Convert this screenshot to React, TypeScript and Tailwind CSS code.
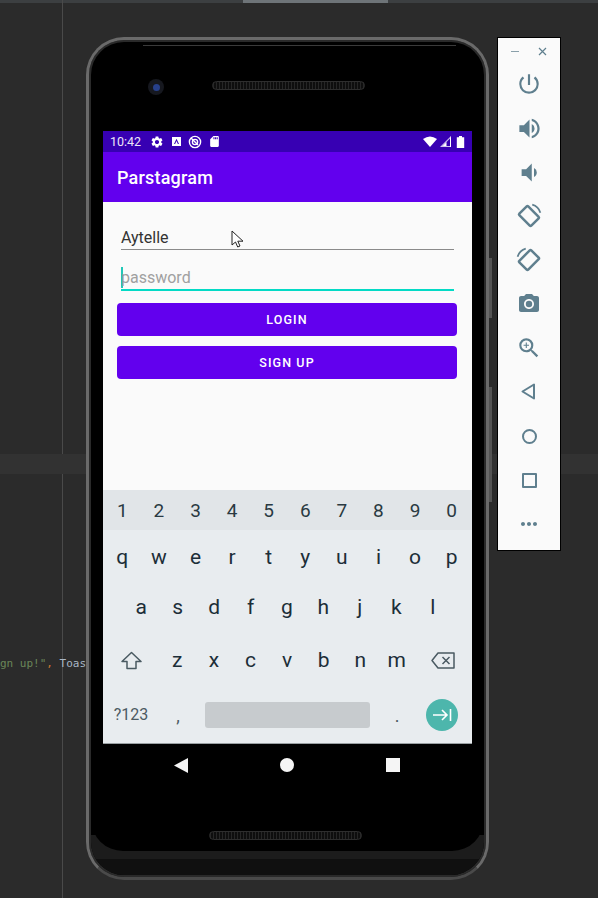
import { MdSettings, MdSdStorage, MdVolumeUp, MdVolumeDown, MdCameraAlt, MdZoomIn, MdMoreHoriz, MdPowerSettingsNew } from "react-icons/md";

const digits = ["1", "2", "3", "4", "5", "6", "7", "8", "9", "0"];
const row1 = ["q", "w", "e", "r", "t", "y", "u", "i", "o", "p"];
const row2 = ["a", "s", "d", "f", "g", "h", "j", "k", "l"];
const row3 = ["z", "x", "c", "v", "b", "n", "m"];

function Key({ label }: { label: string }) {
  return <div className="flex-1 text-center">{label}</div>;
}

function RotateIcon({ flip }: { flip?: boolean }) {
  return (
    <svg width="26" height="26" viewBox="0 0 24 24" fill="none" stroke="#5f7f8e" className={flip ? "-scale-x-100" : ""}>
      <rect x="6.2" y="4.2" width="11.6" height="15.6" rx="1" strokeWidth="2.3" transform="rotate(-45 12 12)" />
      <path d="M15 1.5A11 11 0 0 1 22.5 9" strokeWidth="1.6" />
    </svg>
  );
}

function SidePanel() {
  return (
    <div className="w-[64px] h-[514px] bg-[#fafafa] border border-black flex flex-col items-center">
      <div className="w-full h-[24px] flex items-center justify-center gap-[19px] pt-[2px]">
        <div className="w-[8px] h-[1px] bg-[#8aa0aa]" />
        <svg width="9" height="9" viewBox="0 0 9 9" stroke="#5f7f8e" strokeWidth="1.2">
          <path d="M1 1l7 7M8 1l-7 7" />
        </svg>
      </div>
      <div className="flex flex-col items-center text-[#5f7f8e]">
        <div className="h-[44px] flex items-center"><MdPowerSettingsNew size={26} /></div>
        <div className="h-[44px] flex items-center"><MdVolumeUp size={27} /></div>
        <div className="h-[44px] flex items-center"><MdVolumeDown size={27} /></div>
        <div className="h-[44px] flex items-center"><RotateIcon /></div>
        <div className="h-[44px] flex items-center"><RotateIcon flip /></div>
        <div className="h-[44px] flex items-center"><MdCameraAlt size={24} /></div>
        <div className="h-[44px] flex items-center"><MdZoomIn size={26} /></div>
        <div className="h-[44px] flex items-center">
          <svg width="18" height="20" viewBox="0 0 18 20" fill="none" stroke="#5f7f8e" strokeWidth="2" strokeLinejoin="round">
            <path d="M14 2.5v14L2.5 9.5z" />
          </svg>
        </div>
        <div className="h-[44px] flex items-center">
          <div className="w-[15px] h-[15px] rounded-full border-2 border-[#5f7f8e]" />
        </div>
        <div className="h-[44px] flex items-center">
          <div className="w-[15px] h-[15px] rounded-[1px] border-2 border-[#5f7f8e]" />
        </div>
        <div className="h-[44px] flex items-center"><MdMoreHoriz size={24} /></div>
      </div>
    </div>
  );
}

function StatusBar() {
  return (
    <div className="h-[21px] bg-[#3700b3] flex items-center pl-[7px] pr-[7px] text-white">
      <span className="text-[12.5px] text-[#ece6f8] leading-none w-[40px] pt-[2px]">10:42</span>
      <MdSettings size={14} />
      <svg width="11" height="11" viewBox="0 0 11 11" className="ml-[7px]">
        <rect x="1" y="1" width="9" height="9" fill="#fff" />
        <path d="M5.5 2.8L8 8H6.9L5.5 5 4.1 8H3z" fill="#3700b3" />
      </svg>
      <svg width="14" height="14" viewBox="0 0 14 14" fill="none" stroke="#fff" strokeWidth="1.4" className="ml-[6px]">
        <circle cx="7" cy="7" r="5.6" />
        <circle cx="7" cy="7" r="2.6" />
        <path d="M3 3l7 7" />
      </svg>
      <MdSdStorage size={13} className="ml-[6px]" />
      <div className="ml-auto flex items-center gap-[3px]">
        <svg width="14" height="11" viewBox="0 0 14 11">
          <path d="M0 3Q7-2 14 3L7 11z" fill="#fff" />
        </svg>
        <svg width="11" height="11" viewBox="0 0 11 11">
          <path d="M11 0V11H0z" fill="#cfc2ee" />
          <path d="M10 2.5V10H2.5z" fill="#3700b3" />
          <path d="M6.5 6V10H2.5z" fill="#fff" />
          <path d="M11 0V11H10V2.5z" fill="#fff" />
        </svg>
        <svg width="9" height="12" viewBox="0 0 9 12" className="ml-[2px]">
          <path d="M3 0h3v1.2h2.2V12H.8V1.2H3z" fill="#fff" />
        </svg>
      </div>
    </div>
  );
}

function Keyboard() {
  return (
    <div className="h-[254px] bg-[#e8ecef] text-[#1c2e38] border-b border-[#9aa0a3]">
      <div className="h-[40px] bg-[#e1e5e8] flex items-center text-[19px] text-[#2a3a42] pt-[2px] pl-[1px] pr-[2px]">
        {digits.map((d) => <Key key={d} label={d} />)}
      </div>
      <div className="h-[52px] flex items-center text-[21px] pt-[3px] pl-[1px] pr-[2px]">
        {row1.map((k) => <Key key={k} label={k} />)}
      </div>
      <div className="h-[51px] flex items-center text-[21px] pl-[20px] pr-[21px]">
        {row2.map((k) => <Key key={k} label={k} />)}
      </div>
      <div className="h-[54px] flex items-center text-[21px] pt-[1px]">
        <div className="w-[56px] flex justify-center">
          <svg width="21" height="20" viewBox="0 0 21 20" fill="none" stroke="#4a5a62" strokeWidth="1.5" strokeLinejoin="round">
            <path d="M10.5 1.5L20 10.5h-5v7H6v-7H1z" />
          </svg>
        </div>
        <div className="w-[256px] flex">
          {row3.map((k) => <Key key={k} label={k} />)}
        </div>
        <div className="flex-1 flex justify-center pr-[2px]">
          <svg width="24" height="17" viewBox="0 0 24 17" fill="none" stroke="#4a5a62" strokeWidth="1.5" strokeLinejoin="round">
            <path d="M7 1h16v15H7L1 8.5z" />
            <path d="M11.5 5l7 7M18.5 5l-7 7" />
          </svg>
        </div>
      </div>
      <div className="h-[56px] flex items-center">
        <span className="w-[56px] text-center text-[16px] text-[#4c5a62]">?123</span>
        <span className="w-[46px] text-center text-[18px] text-[#4c5a62] pr-[8px]">,</span>
        <div className="w-[165px] h-[26px] rounded-[3px] bg-[#c7cbce]" />
        <span className="w-[54px] text-center text-[18px] text-[#4c5a62]">.</span>
        <div className="ml-[2px] w-[32px] h-[32px] rounded-full bg-[#4db6ac] flex items-center justify-center">
          <svg width="20" height="14" viewBox="0 0 20 14" fill="none" stroke="#fff" strokeWidth="1.6">
            <path d="M1 7h14M10 2l5 5-5 5M18.5 1v12" />
          </svg>
        </div>
      </div>
    </div>
  );
}

function LoginForm() {
  return (
    <div className="h-[288px] bg-[#fafafa] pl-[14px] pr-[15px] pt-[26px] relative">
      <div className="ml-[4px] mr-[3px] h-[21px] border-b border-[#8a8a8a] text-[16px] leading-[20px] text-[#333] box-content">
        Aytelle
      </div>
      <div className="ml-[4px] mr-[3px] mt-[17px] h-[24px] border-b-2 border-[#03dac5] text-[16px] leading-[22px] text-[#a0a0a0] flex">
        <div className="w-[2px] h-[21px] bg-[#20c8b8] -mr-[2px]" />
        password
      </div>
      <button className="mt-[12px] w-full h-[33px] bg-[#6200ee] rounded-[4px] pt-[2px] text-white text-[12.5px] font-medium tracking-[1.1px]">LOGIN</button>
      <button className="mt-[10px] w-full h-[33px] bg-[#6200ee] rounded-[4px] pt-[2px] text-white text-[12.5px] font-medium tracking-[1.1px]">SIGN UP</button>
      <svg width="14" height="20" viewBox="0 0 14 20" className="absolute left-[128px] top-[28px]" fill="#fff" stroke="#222" strokeWidth="1">
        <path d="M1 1v14l3.5-3 2.2 5 2.3-1-2.2-4.8H12z" />
      </svg>
    </div>
  );
}

function Speaker() {
  return (
    <div className="w-[153px] h-[9px] rounded-full border border-[#2e2e2e] bg-[repeating-linear-gradient(90deg,#262626_0,#262626_1px,#0e0e0e_1px,#0e0e0e_3px)]" />
  );
}

function Phone() {
  return (
    <div className="relative w-[403px] h-[843px] rounded-[38px] border-[3px] border-[#6a6a6a] border-b-[#4a4a4a] bg-black shadow-[inset_0_0_0_2px_#2a2a2a]">
      <div className="absolute -right-[6px] top-[218px] w-[3px] h-[60px] bg-[#555]" />
      <div className="absolute -right-[6px] top-[347px] w-[3px] h-[115px] bg-[#555]" />
      <div className="absolute top-[5px] left-[54px] right-[30px] h-[1px] bg-[#3a3a3a]" />
      <div className="absolute bottom-[2px] left-[2px] right-[2px] h-[40px] rounded-b-[33px] bg-[linear-gradient(#1c1c1c_0,#1c1c1c_60%,#101010_60%)]" />
      <div className="absolute bottom-[26px] left-[2px] right-[2px] h-[40px] rounded-b-[32px] bg-black" />
      <div className="h-[91px] flex items-center pl-[59px]">
        <div className="w-[16px] h-[16px] mt-[3px] rounded-full bg-[#16181f] flex items-center justify-center">
          <div className="w-[7px] h-[7px] rounded-full bg-[#27408b]" />
        </div>
        <div className="ml-[48px]">
          <Speaker />
        </div>
      </div>
      <div className="relative mx-[14px]">
        <StatusBar />
        <div className="h-[50px] bg-[#6200ee] flex items-center px-[14px] text-white text-[18px] font-medium tracking-[0.2px]">Parstagram</div>
        <LoginForm />
        <Keyboard />
      </div>
      <div className="relative h-[42px] mx-[14px] flex items-center justify-center gap-[92px] pr-[2px]">
        <svg width="14" height="15" viewBox="0 0 14 15"><path d="M14 0V15L0 7.5z" fill="#f5f5f5" /></svg>
        <div className="w-[14px] h-[14px] rounded-full bg-[#f5f5f5]" />
        <div className="w-[14px] h-[14px] bg-[#f5f5f5]" />
      </div>
      <div className="relative mt-[45px] flex justify-center pr-[4px]">
        <Speaker />
      </div>
    </div>
  );
}

export default function App() {
  return (
    <div className="relative w-[598px] h-[898px] overflow-hidden bg-[#2b2b2b] font-['Roboto',sans-serif]">
      <div className="absolute top-0 left-0 right-0 h-[3px] bg-[#3c3f41]" />
      <div className="absolute top-0 left-[243px] w-[145px] h-[3px] bg-[#6e7478]" />
      <div className="absolute top-0 bottom-0 left-[62px] w-[1px] bg-[#4a4a4a]" />
      <div className="absolute top-[454px] left-0 right-0 h-[20px] bg-[#323232]" />
      <div className="absolute top-[657px] left-0 text-[11px] leading-[14px] font-['DejaVu_Sans_Mono',monospace] whitespace-pre">
        <span className="text-[#6a8759]">gn up!"</span>
        <span className="text-[#cc7832]">,</span>
        <span className="text-[#a9b7c6]"> Toas</span>
      </div>
      <div className="relative flex items-start gap-[8px] pl-[86px] pt-[37px]">
        <Phone />
        <SidePanel />
      </div>
    </div>
  );
}
